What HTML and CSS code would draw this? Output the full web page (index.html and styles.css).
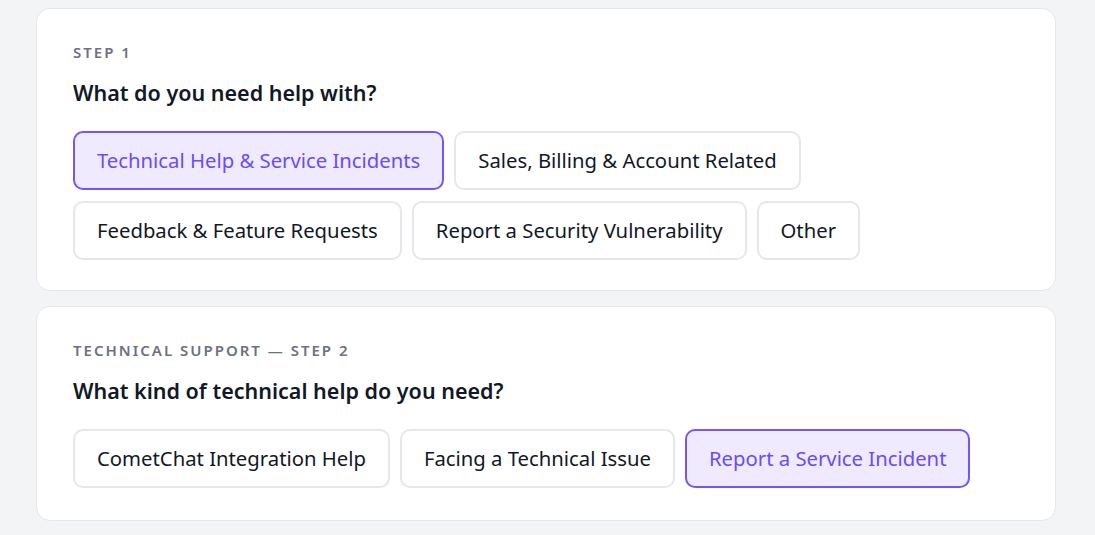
FILE: index.html
```html
<!DOCTYPE html>
<html lang="en">
<head>
    <meta charset="UTF-8">
    <title>Contact Support</title>
    <link rel="stylesheet" href="styles.css">
</head>
<body>
    <div class="wrap">
        <section class="card">
            <div class="step">Step 1</div>
            <h2>What do you need help with?</h2>
            <div class="options">
                <button class="opt selected">Technical Help &amp; Service Incidents</button>
                <button class="opt">Sales, Billing &amp; Account Related</button>
                <button class="opt">Feedback &amp; Feature Requests</button>
                <button class="opt">Report a Security Vulnerability</button>
                <button class="opt">Other</button>
            </div>
        </section>

        <section class="card">
            <div class="step">Technical Support — Step 2</div>
            <h2>What kind of technical help do you need?</h2>
            <div class="options">
                <button class="opt">CometChat Integration Help</button>
                <button class="opt">Facing a Technical Issue</button>
                <button class="opt selected">Report a Service Incident</button>
            </div>
        </section>
    </div>
</body>
</html>
```

FILE: styles.css
```css
body {
    margin: 0;
    background: #f3f4f6;
    font-family: "Noto Sans", sans-serif;
    color: #111827;
}
.wrap {
    width: 1020px;
    margin-left: 36px;
    padding: 8px 0;
    display: flex;
    flex-direction: column;
    gap: 15px;
}
.card {
    background: #fff;
    border: 1px solid #e5e7eb;
    border-radius: 14px;
    padding: 33px 36px 30px;
}
.card + .card {
    padding-bottom: 32px;
}
.step {
    font-size: 15px;
    line-height: 20px;
    font-weight: 600;
    letter-spacing: 2px;
    text-transform: uppercase;
    color: #6b7280;
}
h2 {
    margin: 16px 0 23px;
    font-size: 21.5px;
    line-height: 30px;
    font-weight: 600;
}
.options {
    display: flex;
    flex-wrap: wrap;
    gap: 11px 10px;
}
.opt {
    font-family: inherit;
    font-size: 20.3px;
    line-height: 31px;
    padding: 12px 22px;
    background: #fff;
    color: #111827;
    border: 2px solid #e5e7eb;
    border-radius: 10px;
    cursor: pointer;
}
.opt.selected {
    background: #efeafe;
    border-color: #7555f6;
    color: #6b4cf6;
}
```
